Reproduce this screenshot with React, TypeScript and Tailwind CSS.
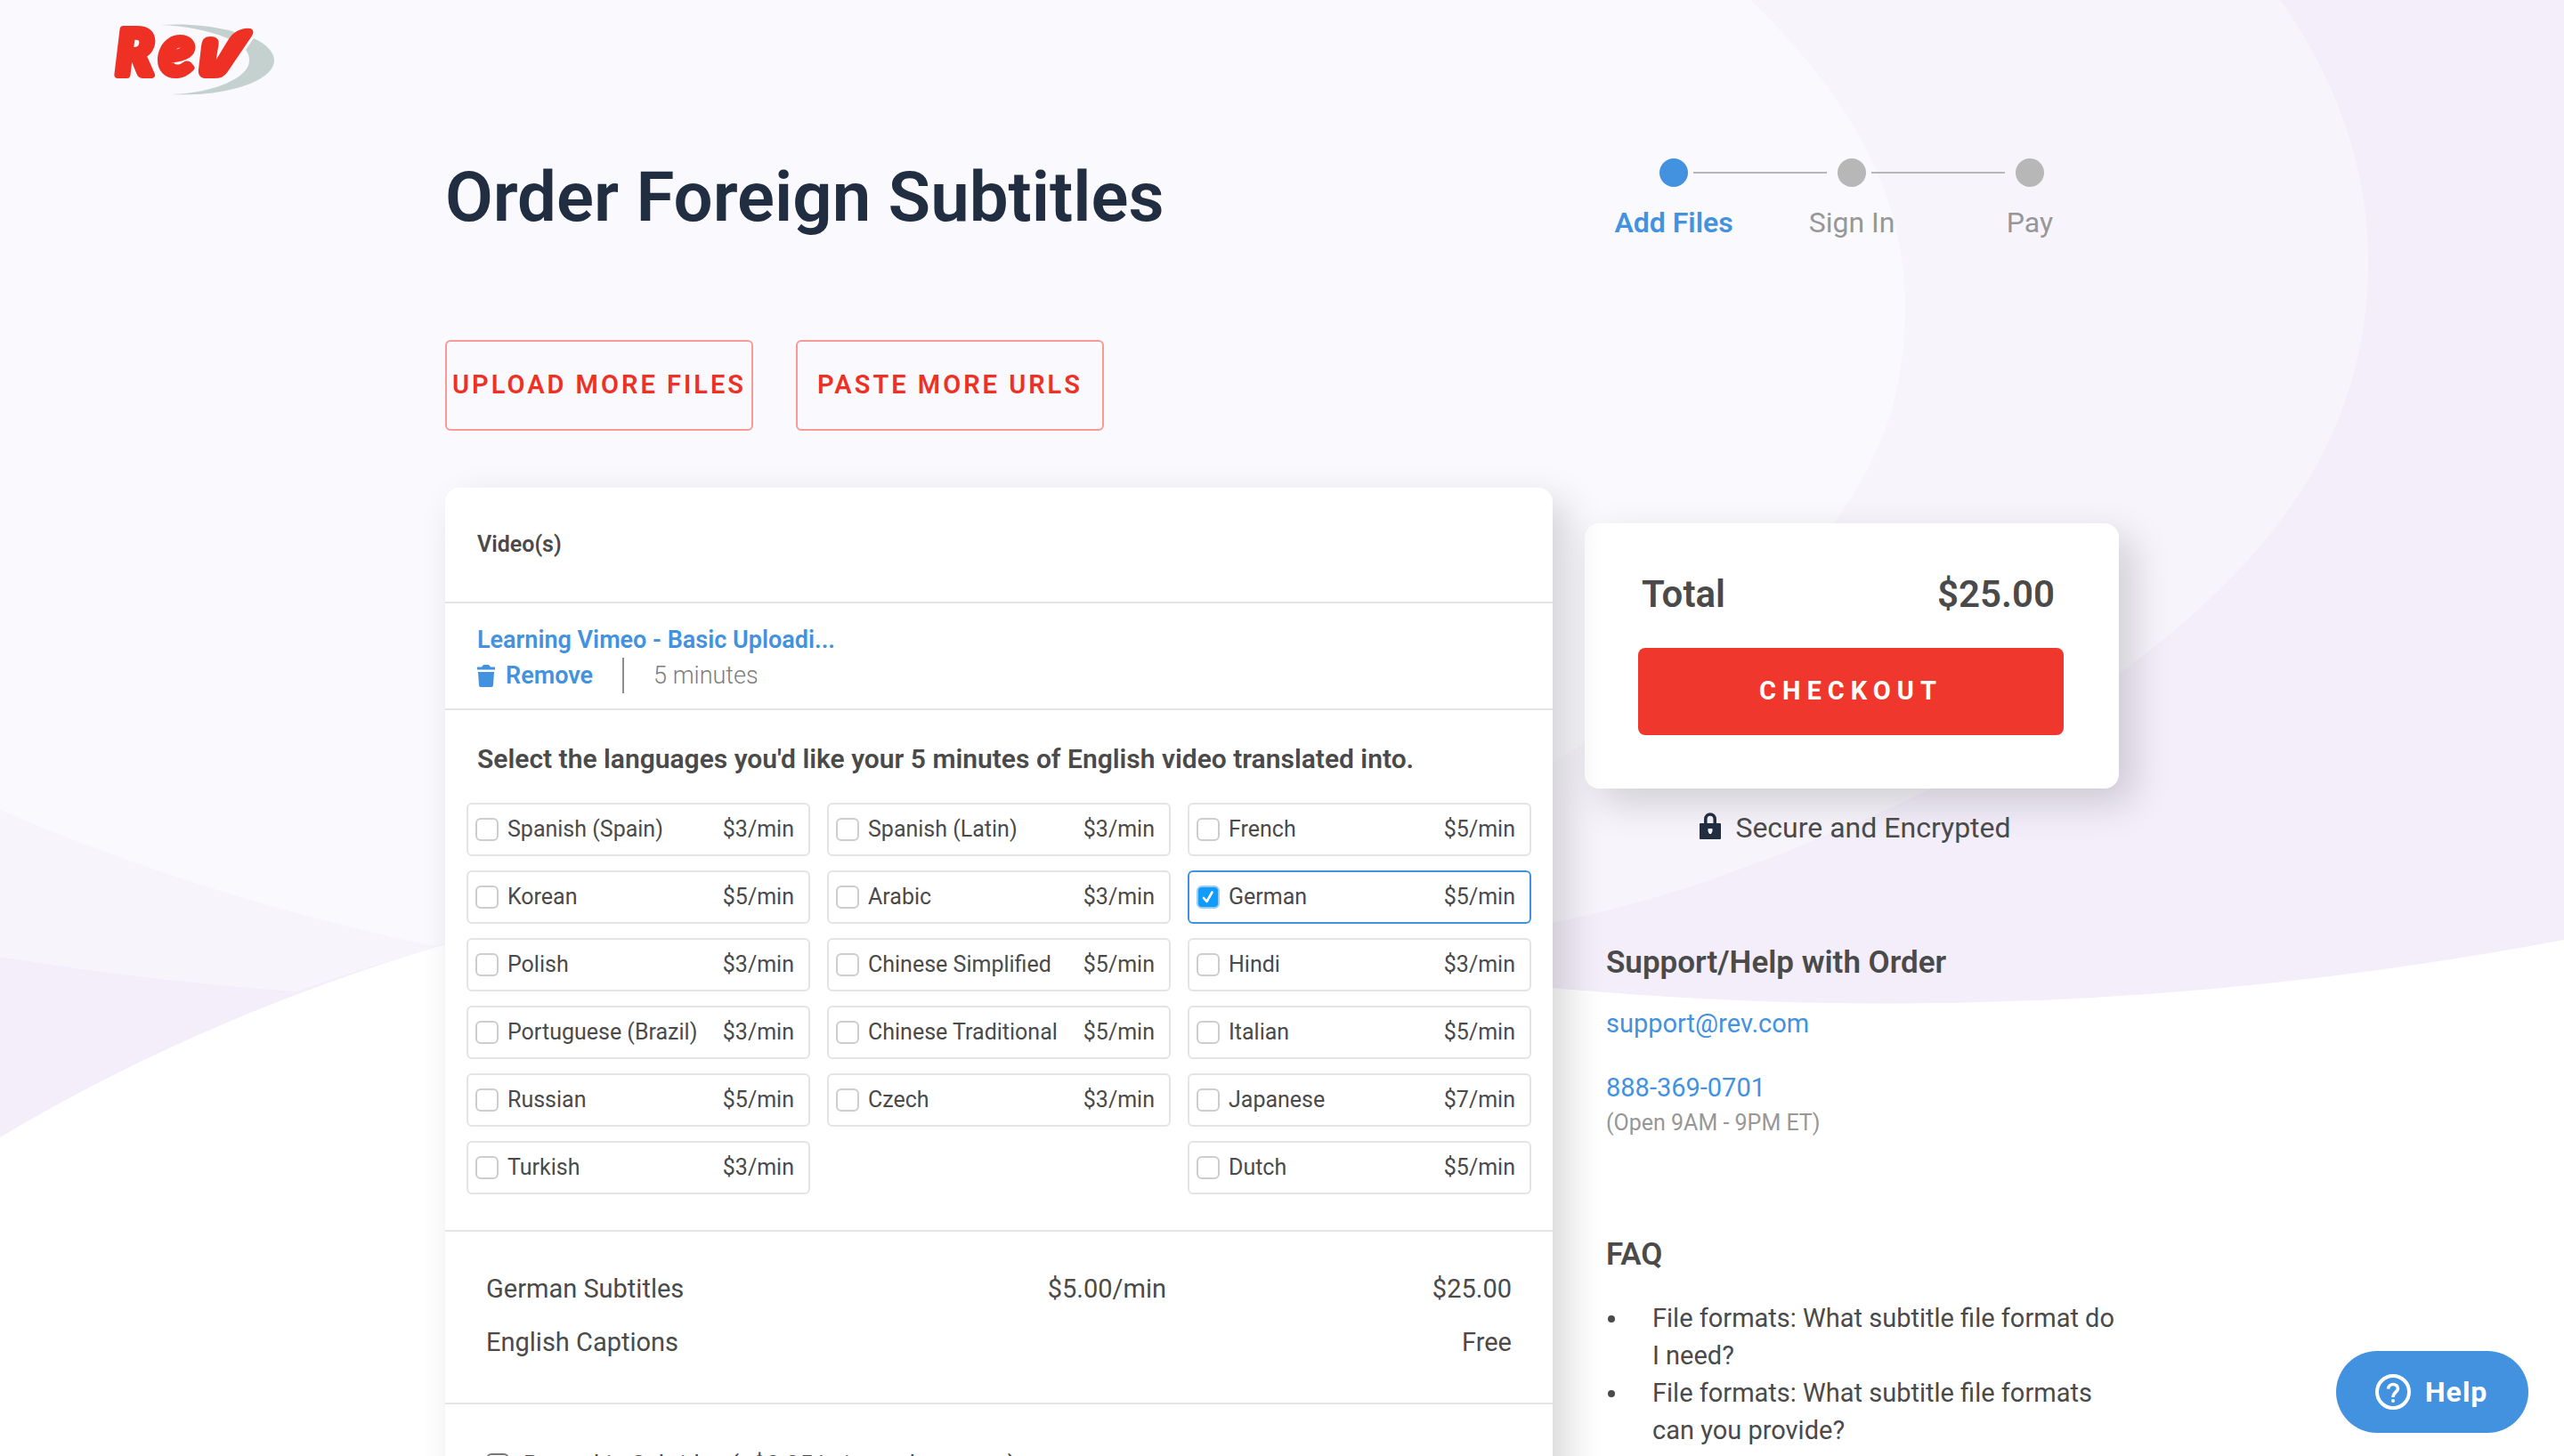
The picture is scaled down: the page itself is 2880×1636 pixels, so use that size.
import { useState } from 'react';

type Language = { name: string; rate: number };

// null keeps an empty cell in the grid
const LANGUAGES: (Language | null)[] = [
  { name: 'Spanish (Spain)', rate: 3 },
  { name: 'Spanish (Latin)', rate: 3 },
  { name: 'French', rate: 5 },
  { name: 'Korean', rate: 5 },
  { name: 'Arabic', rate: 3 },
  { name: 'German', rate: 5 },
  { name: 'Polish', rate: 3 },
  { name: 'Chinese Simplified', rate: 5 },
  { name: 'Hindi', rate: 3 },
  { name: 'Portuguese (Brazil)', rate: 3 },
  { name: 'Chinese Traditional', rate: 5 },
  { name: 'Italian', rate: 5 },
  { name: 'Russian', rate: 5 },
  { name: 'Czech', rate: 3 },
  { name: 'Japanese', rate: 7 },
  { name: 'Turkish', rate: 3 },
  null,
  { name: 'Dutch', rate: 5 },
];

const FAQ = [
  'File formats: What subtitle file format do I need?',
  'File formats: What subtitle file formats can you provide?',
];

const MINUTES = 5;

function Background() {
  return (
    <svg
      className="absolute inset-x-0 top-0 -z-10 h-[1280px] w-full"
      viewBox="0 0 2880 1280"
      preserveAspectRatio="none"
      aria-hidden="true"
    >
      <path fill="#f3eefa" d="M0 0H2880V1056Q2312 1163 1744 1110L500 1061Q223 1144 0 1278Z" />
      <path
        fill="#f7f5fb"
        d="M0 0H2561Q2660 140 2660 294C2660 500 2540 640 2380 757C2250 855 2110 920 1945 980Q1850 1015 1744 1037L500 1061Q420 1084 333 1114Q160 1102 0 1075Z"
      />
      <path
        fill="#faf9fe"
        d="M0 0H1966C2080 110 2140 220 2140 345C2140 430 2120 500 2070 573C2000 680 1890 770 1744 857L520 1056L487 1063C320 1028 150 975 0 910Z"
      />
    </svg>
  );
}

function Logo() {
  return (
    <svg className="h-[84px] w-[184px] overflow-visible" viewBox="0 0 184 84" role="img" aria-label="Rev">
      <g fill="#c5d1ce">
        <path d="M52 2C84 0 112 3 136 10L130 18C106 8 80 3 52 2Z" />
        <path d="M157 17C172 24 180 33 180 42C180 64 130 83 64 80C112 78 152 62 152 42C152 37 151 34 148 30Z" />
      </g>
      <g fill="#ee3124" stroke="#ee3124" strokeLinejoin="round">
        <text y="58" className="font-['Lato'] font-black italic">
          <tspan x="2" strokeWidth="8" className="text-[70px]">R</tspan>
          <tspan x="51" strokeWidth="7" className="text-[80px]">e</tspan>
        </text>
        <path
          strokeWidth="2"
          d="M101 19C104 15 113 15 116 19C117 21 117 23 116 27L113 46L130 18C136 9 146 6 153 7C156 8 156 11 154 14L127 54C123 60 119 61 112 61H104C98 61 95 58 96 52L99 26C99 23 100 21 101 19Z"
        />
      </g>
    </svg>
  );
}

function Steps() {
  return (
    <nav aria-label="Order progress">
      <div className="flex items-center px-[84px]">
        <span className="size-8 rounded-full bg-[#4292e0]" />
        <span className="mr-3 ml-1.5 h-0.5 flex-1 bg-[#b7b7b7]" />
        <span className="size-8 rounded-full bg-[#b7b7b7]" />
        <span className="mr-3 ml-1.5 h-0.5 flex-1 bg-[#b7b7b7]" />
        <span className="size-8 rounded-full bg-[#b7b7b7]" />
      </div>
      <ol className="mt-5 grid grid-cols-3 text-center text-[32px] leading-10 text-[#979797]">
        <li className="font-semibold text-[#4292e0]" aria-current="step">Add Files</li>
        <li>Sign In</li>
        <li>Pay</li>
      </ol>
    </nav>
  );
}

function TrashIcon() {
  return (
    <svg className="h-[25px] w-5" viewBox="0 0 20 25" fill="currentColor" aria-hidden="true">
      <path d="M0 2.5H5L7 0H13L15 2.5H20V5.5H0Z" />
      <path d="M1 8H19L18 23Q18 25 16 25H4Q2 25 2 23Z" />
    </svg>
  );
}

function LockIcon() {
  return (
    <svg className="mb-1 h-[30px] w-6" viewBox="0 0 24 30" aria-hidden="true">
      <path fill="none" stroke="#212d40" strokeWidth="3.5" d="M6.8 13V7.5a5.2 5.6 0 0 1 10.4 0V13" />
      <path
        fill="#212d40"
        fillRule="evenodd"
        d="M1 12H23Q24 12 24 13V29Q24 30 23 30H1Q0 30 0 29V13Q0 12 1 12ZM9.5 18.5V21L11 24H13L14.5 21V18.5Q14.5 18 14 18H10Q9.5 18 9.5 18.5Z"
      />
    </svg>
  );
}

function CheckBox({ checked, onChange }: { checked: boolean; onChange: () => void }) {
  return (
    <span className="grid size-[26px] shrink-0">
      <input
        type="checkbox"
        checked={checked}
        onChange={onChange}
        className="col-start-1 row-start-1 size-[26px] appearance-none rounded-md border-2 border-[#cdcdcd] bg-white checked:border-[#9ccbfa] checked:bg-[#119bfb]"
      />
      {checked && (
        <svg className="pointer-events-none col-start-1 row-start-1 size-[26px]" viewBox="0 0 26 26" aria-hidden="true">
          <path d="M8 14L11.5 18L17.5 7.5" fill="none" stroke="#fff" strokeWidth="2.6" strokeLinecap="round" strokeLinejoin="round" />
        </svg>
      )}
    </span>
  );
}

export default function App() {
  const [selected, setSelected] = useState<string[]>(['German']);
  const [burnedIn, setBurnedIn] = useState(false);

  const toggle = (name: string) => {
    setSelected((prev) => (prev.includes(name) ? prev.filter((n) => n !== name) : [...prev, name]));
  };

  const chosen = LANGUAGES.filter((l): l is Language => l !== null && selected.includes(l.name));
  const total = chosen.reduce((sum, l) => sum + l.rate * MINUTES, 0);

  return (
    <div className="relative isolate min-h-screen overflow-hidden bg-white font-['Roboto',sans-serif] text-[#4a4a4a]">
      <Background />

      <header className="h-[178px] px-32 pt-[26px]">
        <a href="#" className="inline-block">
          <Logo />
        </a>
      </header>

      <main className="mx-auto max-w-[1880px]">
        <div className="grid grid-cols-[minmax(0,1fr)_600px] gap-x-9">
          <h1 className="text-[78px] leading-[88px] font-semibold text-[#212d40]">Order Foreign Subtitles</h1>
          <Steps />
        </div>

        <div className="mt-28 flex gap-12">
          <button className="h-[102px] w-[346px] rounded-md border-2 border-[#f79b96] text-[29px] font-semibold tracking-[3px] whitespace-nowrap text-[#ee3124]">
            UPLOAD MORE FILES
          </button>
          <button className="h-[102px] w-[346px] rounded-md border-2 border-[#f79b96] text-[29px] font-semibold tracking-[3px] whitespace-nowrap text-[#ee3124]">
            PASTE MORE URLS
          </button>
        </div>

        <div className="mt-16 grid grid-cols-[minmax(0,1fr)_600px] items-start gap-x-9">
          <section className="z-10 rounded-2xl bg-white shadow-[16px_16px_44px_rgba(0,0,0,0.16)]">
            <h2 className="flex h-[130px] items-center border-b-2 border-[#e4e4e4] px-9 text-[25px] font-semibold">Video(s)</h2>

            <div className="border-b-2 border-[#e4e4e4] px-9 pt-[21px] pb-[17px] leading-10">
              <a href="#" className="block w-[420px] truncate text-[27px] font-semibold text-[#4292e0]">
                Learning Vimeo - Basic Uploadi...
              </a>
              <div className="flex items-center">
                <button className="flex items-center gap-3 text-[27px] font-semibold text-[#4292e0]">
                  <TrashIcon />
                  Remove
                </button>
                <span className="mx-[33px] h-10 w-0.5 bg-[#8b8b8b]" />
                <span className="text-[27px] font-light text-[#7d7d7d]">{MINUTES} minutes</span>
              </div>
            </div>

            <div className="border-b-2 border-[#e4e4e4] px-6 pt-[35px] pb-10">
              <h3 className="px-3 text-[30px] leading-10 font-semibold">
                Select the languages you'd like your {MINUTES} minutes of English video translated into.
              </h3>
              <div className="mt-[29px] grid grid-cols-3 gap-x-[19px] gap-y-4 text-[25px]">
                {LANGUAGES.map((lang, i) =>
                  lang ? (
                    <label
                      key={lang.name}
                      className={
                        selected.includes(lang.name)
                          ? 'flex h-[60px] items-center gap-2.5 rounded-md border-2 border-[#4292e0] pr-4 pl-2'
                          : 'flex h-[60px] items-center gap-2.5 rounded-md border-2 border-[#e4e4e4] pr-4 pl-2'
                      }
                    >
                      <CheckBox checked={selected.includes(lang.name)} onChange={() => toggle(lang.name)} />
                      <span className="flex-1 whitespace-nowrap">{lang.name}</span>
                      <span>${lang.rate}/min</span>
                    </label>
                  ) : (
                    <div key={i} />
                  )
                )}
              </div>
            </div>

            <div className="border-b-2 border-[#e4e4e4] px-[46px] pt-[34px] pb-[38px]">
              <table className="w-full table-fixed text-[29px] leading-[60px]">
                <tbody>
                  {chosen.map((l) => (
                    <tr key={l.name}>
                      <td>{l.name} Subtitles</td>
                      <td className="pr-1 text-right">${l.rate.toFixed(2)}/min</td>
                      <td className="text-right">${(l.rate * MINUTES).toFixed(2)}</td>
                    </tr>
                  ))}
                  <tr>
                    <td>English Captions</td>
                    <td />
                    <td className="text-right">Free</td>
                  </tr>
                </tbody>
              </table>
            </div>

            <label className="flex items-center gap-4 px-[46px] pt-12 pb-12 text-[27px] leading-10">
              <input
                type="checkbox"
                checked={burnedIn}
                onChange={() => setBurnedIn(!burnedIn)}
                className="size-[26px] appearance-none rounded-md border-2 border-[#767676] bg-white"
              />
              Burned-in Subtitles (+$0.25/min per language)
            </label>
          </section>

          <aside className="pt-10">
            <div className="rounded-2xl bg-white pt-14 pr-[62px] pb-[60px] pl-[60px] shadow-[16px_16px_44px_rgba(0,0,0,0.16)]">
              <div className="flex justify-between pr-2.5 pl-1 text-[42px] leading-[48px] font-semibold">
                <span>Total</span>
                <span>${total.toFixed(2)}</span>
              </div>
              <button className="mt-9 h-[98px] w-full rounded-lg bg-[#f0372d] text-[29px] font-bold tracking-[7px] text-white">
                CHECKOUT
              </button>
            </div>

            <p className="mt-6 flex items-center justify-center gap-4 pl-2 text-[32px] leading-10">
              <LockIcon />
              Secure and Encrypted
            </p>

            <div className="mt-[108px] pl-6 text-[29px] leading-10">
              <h2 className="text-[35px] leading-[48px] font-semibold">Support/Help with Order</h2>
              <a href="mailto:support@rev.com" className="mt-6 block text-[#4292e0]">support@rev.com</a>
              <a href="tel:888-369-0701" className="mt-8 block text-[#4292e0]">888-369-0701</a>
              <p className="text-[25px] text-[#979797]">(Open 9AM - 9PM ET)</p>

              <h2 className="mt-[104px] text-[35px] leading-[48px] font-semibold">FAQ</h2>
              <ul className="mt-[26px] leading-[42px]">
                {FAQ.map((q) => (
                  <li key={q} className="flex">
                    <span className="mt-[18px] mr-[42px] ml-0.5 size-2 shrink-0 rounded-full bg-[#4a4a4a]" />
                    <span>{q}</span>
                  </li>
                ))}
              </ul>
            </div>
          </aside>
        </div>
      </main>

      <button className="fixed right-10 bottom-[26px] z-20 flex h-[92px] w-[216px] items-center gap-4 rounded-full bg-[#4292e0] pl-11 text-[32px] font-bold tracking-[1px] text-white">
        <svg className="size-10" viewBox="0 0 40 40" fill="none" stroke="#fff" aria-hidden="true">
          <circle cx="20" cy="20" r="18" strokeWidth="4" />
          <path strokeWidth="3.6" d="M14.6 16.6C14.8 9.8 25.4 10 25.4 16.2C25.4 20 20 20.4 20 26" />
          <circle cx="20" cy="30" r="2" fill="#fff" stroke="none" />
        </svg>
        Help
      </button>
    </div>
  );
}
